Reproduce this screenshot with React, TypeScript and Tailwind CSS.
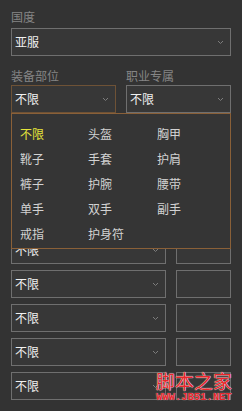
import React from "react";

const Chevron = () => (
  <svg width="7" height="5" viewBox="0 0 7 5" className="shrink-0">
    <polyline points="1,1 3.5,3.5 6,1" fill="none" stroke="#7d7d7d" strokeWidth="1" />
  </svg>
);

const Select = ({
  text,
  className,
  chevron = true,
  border = "border-[#6f6f6f]",
}: {
  text?: string;
  className: string;
  chevron?: boolean;
  border?: string;
}) => (
  <div
    className={`h-[28px] border ${border} bg-[#373737] flex items-center justify-between pl-[3px] pr-[6px] ${className}`}
  >
    <span className="text-[12px] leading-[14px] text-[#f0f0f0]">{text}</span>
    {chevron && <Chevron />}
  </div>
);

const items = [
  "不限", "头盔", "胸甲",
  "靴子", "手套", "护肩",
  "裤子", "护腕", "腰带",
  "单手", "双手", "副手",
  "戒指", "护身符", "",
];

export default function App() {
  return (
    <div
      className="relative w-[242px] h-[411px] bg-[#333333] overflow-hidden pl-[11px] pt-[10px]"
      style={{ fontFamily: '"Noto Sans CJK SC", "Noto Sans", sans-serif' }}
    >
      <div className="text-[12px] leading-[14px] h-[14px] text-[#858585]">国度</div>
      <Select text="亚服" className="w-[220px] mt-[4px]" />
      <div className="flex mt-[13px] h-[14px] text-[12px] leading-[14px] text-[#858585]">
        <span className="w-[115px]">装备部位</span>
        <span>职业专属</span>
      </div>
      <div className="relative flex gap-[10px] mt-[2px] z-10">
        <Select text="不限" className="w-[105px]" border="border-[#6e5236]" />
        <Select text="不限" className="w-[105px]" />
        <div className="absolute left-0 top-[28px] w-[220px] h-[136px] border border-[#8a6038] bg-[#353535] pl-[8px] pt-[7px]">
          <div className="grid grid-cols-[68px_69px_68px]">
            {items.map((it, i) => (
              <div
                key={i}
                className={`h-[25px] flex items-center text-[12px] leading-[14px] ${
                  i === 0 ? "text-[#e4e43a]" : "text-[#d2d2d2]"
                }`}
              >
                {it}
              </div>
            ))}
          </div>
        </div>
      </div>
      <div className="flex flex-col gap-[6px] mt-[21px]">
        {Array.from({ length: 8 }).map((_, i) => (
          <div key={i} className="flex gap-[10px]">
            <Select text={i < 3 ? "" : "不限"} className="w-[155px]" />
            <Select className="w-[55px]" chevron={false} />
          </div>
        ))}
      </div>
      <div className="absolute left-[156px] top-[371px] flex flex-col items-center">
        <span
          className="text-[19px] leading-[20px] text-[#e8262b]"
          style={{ textShadow: "0 0 1px #fff, 0 0 1px #fff" }}
        >
          脚本之家
        </span>
        <span
          className="mt-[1px] text-[10.5px] leading-[11px] font-bold text-[#e8262b]"
          style={{ fontFamily: '"Liberation Mono", monospace', textShadow: "0 0 1px #fff" }}
        >
          WWW.JB51.NET
        </span>
      </div>
    </div>
  );
}
